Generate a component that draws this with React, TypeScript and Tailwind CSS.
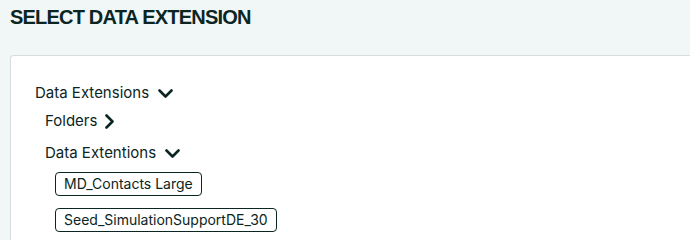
const tables = ["MD_Contacts Large", "Seed_SimulationSupportDE_30"];

const ChevronDown = () => (
  <svg width="15" height="9" viewBox="0 0 15 9" fill="none" aria-hidden="true">
    <path d="M1.5 1.5 L7.5 7.5 L13.5 1.5" stroke="currentColor" strokeWidth="2.6" strokeLinecap="round" strokeLinejoin="round" />
  </svg>
);

const ChevronRight = () => (
  <svg width="9" height="15" viewBox="0 0 9 15" fill="none" aria-hidden="true">
    <path d="M1.5 1.5 L7.5 7.5 L1.5 13.5" stroke="currentColor" strokeWidth="2.6" strokeLinecap="round" strokeLinejoin="round" />
  </svg>
);

const App = () => {
  return (
    <div
      className="min-h-[239px] w-[690px] overflow-hidden bg-[#f1f6f7] text-[#0b2523]"
      style={{ fontFamily: "Inter, 'Liberation Sans', sans-serif" }}
    >
      <h1 className="px-[10px] pt-[5px] font-['Liberation_Sans',sans-serif] text-[20px] font-bold leading-[24px] tracking-[-0.8px]">
        SELECT DATA EXTENSION
      </h1>

      {/* Card */}
      <div className="ml-[10px] mt-[26px] h-[200px] rounded-tl-[4px] border-l border-t border-[#d9dcdc] bg-white pl-[24px] pt-[26px]">
        <div className="flex items-center gap-[9px] text-[15px] leading-[22px]">
          <span>Data Extensions</span>
          <ChevronDown />
        </div>

        <div className="pl-[10px]">
          <div className="mt-[6px] flex items-center gap-[8px] text-[15px] leading-[22px]">
            <span>Folders</span>
            <ChevronRight />
          </div>

          <div className="mt-[10px] flex items-center gap-[9px] text-[15px] leading-[22px]">
            <span>Data Extentions</span>
            <ChevronDown />
          </div>

          <div className="mt-[8px] flex flex-col items-start gap-[12px] pl-[10px]">
            {tables.map((name) => (
              <button
                key={name}
                type="button"
                className="h-[24px] rounded-[4px] border border-[#0b2523] px-[8px] text-[14px] leading-[22px]"
              >
                {name}
              </button>
            ))}
          </div>
        </div>
      </div>
    </div>
  );
};

export default App;
